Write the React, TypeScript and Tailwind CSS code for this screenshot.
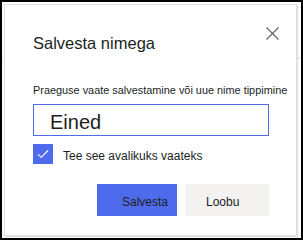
import React from "react";

export default function App() {
  return (
    <div
      className="relative w-[303px] h-[240px] bg-white border-2 border-black overflow-hidden text-[#201f1e]"
      style={{ fontFamily: '"Liberation Sans", Arial, sans-serif' }}
    >
      <div className="absolute left-0 right-0 top-[56px] h-px bg-[#e6e6e6]" />
      <div className="absolute left-[2px] top-[2px] w-[293px] h-[232px] bg-white border border-[#e1e1e1] shadow-[1px_1px_1px_rgba(0,0,0,0.12)] flex flex-col pl-[28px] pr-[27px] pt-[28px]">
        <div className="flex items-start justify-between">
          <div className="text-[16.5px] leading-[20px]">Salvesta nimega</div>
          <button className="-mt-[6px] -mr-[10px] w-[13px] h-[13px] flex items-center justify-center text-[#605e5c]">
            <svg width="13" height="13" viewBox="0 0 13 13" fill="none">
              <path d="M0.5 0.5L12.5 12.5M12.5 0.5L0.5 12.5" stroke="#605e5c" strokeWidth="1.1" />
            </svg>
          </button>
        </div>
        <div className="mt-[30px] text-[10.9px] leading-[14px] whitespace-nowrap">
          Praeguse vaate salvestamine või uue nime tippimine
        </div>
        <div className="mt-[7px] h-[32px] w-[236px] border border-[#4f6bed] pl-[16px] pt-[5px] text-[20px] leading-[24px]">
          Eined
        </div>
        <div className="mt-[8px] flex items-center gap-[10px]">
          <div className="w-[20px] h-[20px] bg-[#4f6bed] flex items-center justify-center">
            <svg width="12" height="10" viewBox="0 0 12 10" fill="none">
              <path d="M1 5.2L4.2 8.3L11 1.5" stroke="white" strokeWidth="1.1" />
            </svg>
          </div>
          <div className="text-[12px] leading-[16px] pt-[4px]">Tee see avalikuks vaateks</div>
        </div>
        <div className="mt-[20px] flex justify-end gap-[8px]">
          <button className="w-[80px] h-[32px] bg-[#4f6bed] text-[12px] text-[#201f1e] flex items-center justify-start pl-[25px] pt-[4px]">
            Salvesta
          </button>
          <button className="w-[84px] h-[32px] bg-[#f3f2f1] text-[12px] text-[#201f1e] flex items-center justify-start pl-[21px] pt-[4px]">
            Loobu
          </button>
        </div>
      </div>
    </div>
  );
}
